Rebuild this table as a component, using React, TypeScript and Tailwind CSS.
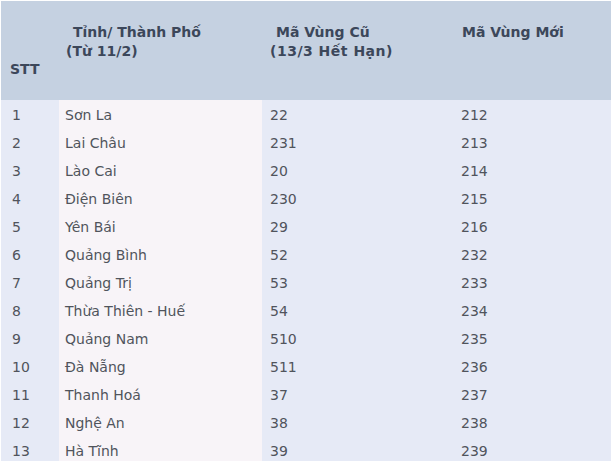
import React from "react";

const rows: [string, string, string, string][] = [
  ["1", "Sơn La", "22", "212"],
  ["2", "Lai Châu", "231", "213"],
  ["3", "Lào Cai", "20", "214"],
  ["4", "Điện Biên", "230", "215"],
  ["5", "Yên Bái", "29", "216"],
  ["6", "Quảng Bình", "52", "232"],
  ["7", "Quảng Trị", "53", "233"],
  ["8", "Thừa Thiên - Huế", "54", "234"],
  ["9", "Quảng Nam", "510", "235"],
  ["10", "Đà Nẵng", "511", "236"],
  ["11", "Thanh Hoá", "37", "237"],
  ["12", "Nghệ An", "38", "238"],
  ["13", "Hà Tĩnh", "39", "239"],
];

export default function App() {
  return (
    <div
      className="w-[611px] h-[461px] overflow-hidden bg-white pt-px pl-px"
      style={{ fontFamily: '"DejaVu Sans", sans-serif' }}
    >
      <div className="grid grid-cols-[58px_203px_199px_150px] h-[99px] bg-[#c5d1e1] text-[14px] font-bold leading-[19px] text-[#3c475a]">
        <div className="flex items-end pl-[9px] pb-[21px]">STT</div>
        <div className="pl-[7px] pt-[22px]">
          <div className="pl-[7px]">Tỉnh/ Thành Phố</div>
          <div>(Từ 11/2)</div>
        </div>
        <div className="pl-[8px] pt-[22px]">
          <div className="pl-[6px]">Mã Vùng Cũ</div>
          <div className="tracking-[0.5px]">(13/3 Hết Hạn)</div>
        </div>
        <div className="pl-[1px] pt-[22px]">Mã Vùng Mới</div>
      </div>
      <div className="grid grid-cols-[58px_203px_199px_150px] text-[14px] text-[#50545c] leading-[26px]">
        {rows.map((r) => (
          <React.Fragment key={r[0]}>
            <div className="bg-[#e6eaf6] pl-[11px] pt-[2px]">{r[0]}</div>
            <div className="bg-[#f8f4f8] pl-[6px] pt-[2px]">{r[1]}</div>
            <div className="bg-[#e6eaf6] pl-[8px] pt-[2px]">{r[2]}</div>
            <div className="bg-[#e6eaf6] pt-[2px]">{r[3]}</div>
          </React.Fragment>
        ))}
      </div>
    </div>
  );
}
